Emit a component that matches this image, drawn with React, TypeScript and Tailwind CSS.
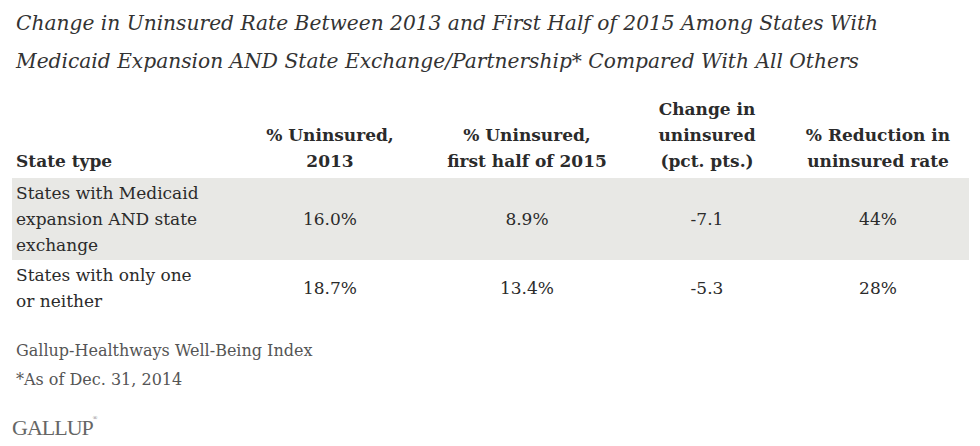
export default function App() {
  const serif = { fontFamily: '"DejaVu Serif", "Liberation Serif", serif' };
  const rows = [
    { label: ["States with Medicaid", "expansion AND state", "exchange"], vals: ["16.0%", "8.9%", "-7.1", "44%"], shaded: true },
    { label: ["States with only one", "or neither"], vals: ["18.7%", "13.4%", "-5.3", "28%"], shaded: false },
  ];

  return (
    <div className="w-[980px] h-[446px] bg-white text-[#2b2b2b] overflow-hidden" style={serif}>
      {/* title */}
      <div className="pl-[16px] pt-[4px] italic text-[20.2px] leading-[38px] text-[#333]">
        <p>Change in Uninsured Rate Between 2013 and First Half of 2015 Among States With</p>
        <p>Medicaid Expansion AND State Exchange/Partnership* Compared With All Others</p>
      </div>

      {/* table */}
      <div className="mx-[12px] mt-[16px] w-[957px] text-[17px]">
        <div className="grid grid-cols-[228px_180px_214px_146px_1fr] items-end font-bold leading-[26px] pb-[4px]">
          <div className="pl-[4px]">State type</div>
          <div className="text-center">% Uninsured,<br />2013</div>
          <div className="text-center">% Uninsured,<br />first half of 2015</div>
          <div className="text-center">Change in<br />uninsured<br />(pct. pts.)</div>
          <div className="text-center pl-[7px]">% Reduction in<br />uninsured rate</div>
        </div>
        {rows.map((r) => (
          <div
            key={r.vals[0]}
            className={`grid grid-cols-[228px_180px_214px_146px_1fr] items-center leading-[26px] ${r.shaded ? "bg-[#e8e8e5] py-[2px]" : "py-[2px]"}`}
          >
            <div className="pl-[4px]">
              {r.label.map((l) => (
                <div key={l}>{l}</div>
              ))}
            </div>
            {r.vals.map((v, i) => (
              <div key={i} className={`text-center ${i === 3 ? "pl-[7px]" : ""}`}>{v}</div>
            ))}
          </div>
        ))}
      </div>

      {/* footer */}
      <div className="pl-[16px] mt-[20px] text-[16px] leading-[29px] text-[#555]">
        <p>Gallup-Healthways Well-Being Index</p>
        <p>*As of Dec. 31, 2014</p>
      </div>
      <div className="pl-[12px] mt-[22px] text-[22px] leading-[24px] text-[#666] tracking-[-1px]" style={{ fontFamily: '"Liberation Serif", serif' }}>
        GALLUP<sup className="text-[6px] align-top relative top-[2px]">®</sup>
      </div>
    </div>
  );
}
